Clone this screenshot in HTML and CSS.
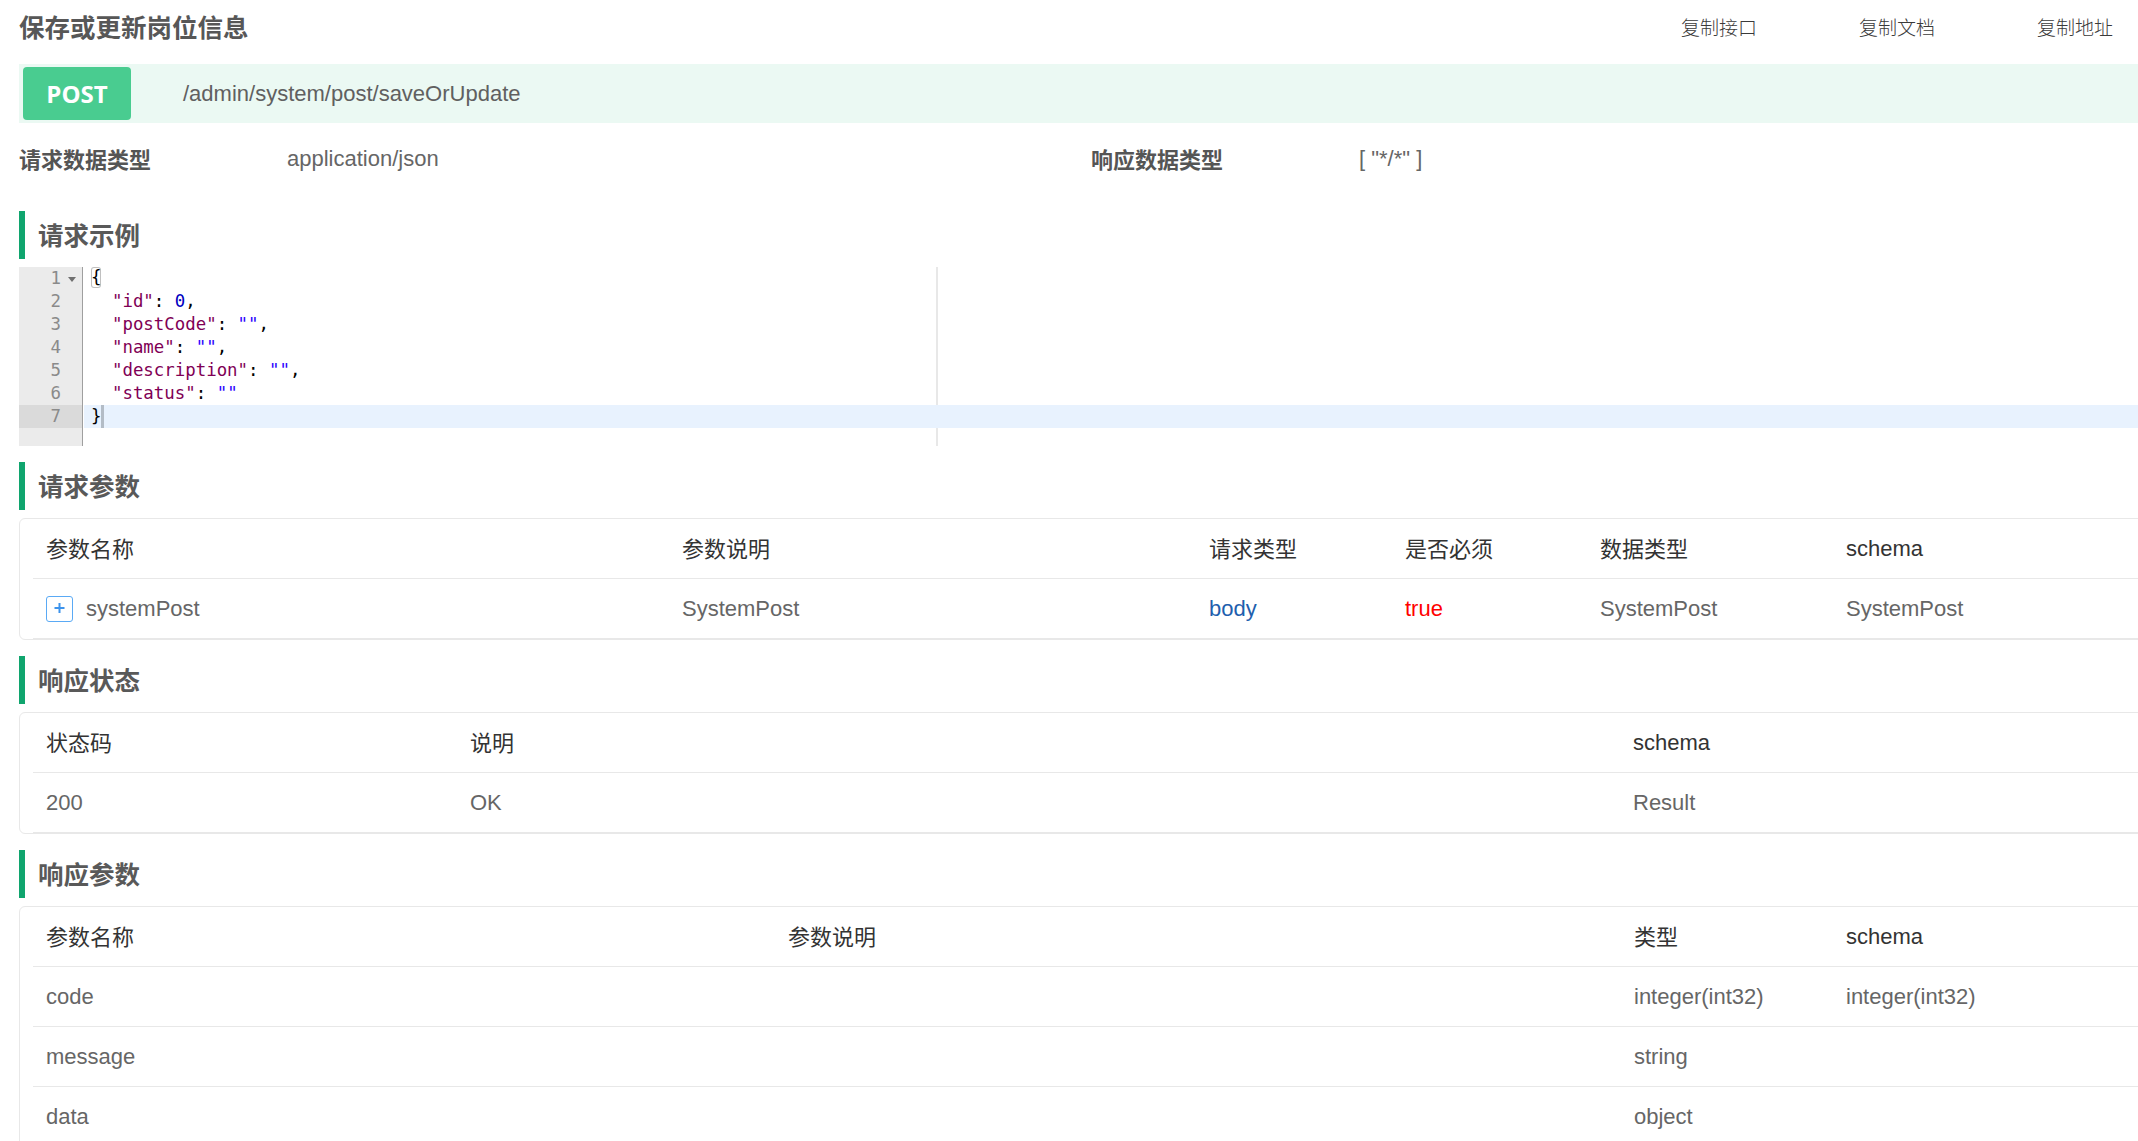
FILE: index.html
```html
<!DOCTYPE html>
<html lang="zh-CN">
<head>
<meta charset="utf-8">
<title>保存或更新岗位信息</title>
<link rel="stylesheet" href="styles.css">
</head>
<body>
<header class="top">
  <h1 class="page-title">保存或更新岗位信息</h1>
  <nav class="copy-links">
    <a class="copy-link">复制接口</a>
    <a class="copy-link">复制文档</a>
    <a class="copy-link">复制地址</a>
  </nav>
</header>
<main class="doc">
  <div class="band">
    <span class="badge">POST</span>
    <span class="path">/admin/system/post/saveOrUpdate</span>
  </div>
  <div class="info">
    <div class="info-col">
      <span class="info-label">请求数据类型</span>
      <span class="info-value">application/json</span>
    </div>
    <div class="info-col">
      <span class="info-label">响应数据类型</span>
      <span class="info-value">[ "*/*" ]</span>
    </div>
  </div>

  <h2 class="sec-title first">请求示例</h2>
  <div class="editor">
    <div class="gutter">
      <div class="g-line"><span class="g-num">1</span><span class="fold"><svg width="15" height="23" viewBox="0 0 15 23"><polygon points="7,10 15,10 11,15" fill="#6f6f6f"/></svg></span></div>
      <div class="g-line"><span class="g-num">2</span><span class="fold"></span></div>
      <div class="g-line"><span class="g-num">3</span><span class="fold"></span></div>
      <div class="g-line"><span class="g-num">4</span><span class="fold"></span></div>
      <div class="g-line"><span class="g-num">5</span><span class="fold"></span></div>
      <div class="g-line"><span class="g-num">6</span><span class="fold"></span></div>
      <div class="g-line g-active"><span class="g-num">7</span><span class="fold"></span></div>
    </div>
    <div class="code">
      <div class="print-margin"></div>
      <div class="c-line"><span class="bracket">{</span></div>
      <div class="c-line">  <span class="k">"id"</span>: <span class="n">0</span>,</div>
      <div class="c-line">  <span class="k">"postCode"</span>: <span class="s">""</span>,</div>
      <div class="c-line">  <span class="k">"name"</span>: <span class="s">""</span>,</div>
      <div class="c-line">  <span class="k">"description"</span>: <span class="s">""</span>,</div>
      <div class="c-line">  <span class="k">"status"</span>: <span class="s">""</span></div>
      <div class="c-line c-active">}<span class="cursor"></span></div>
    </div>
  </div>

  <h2 class="sec-title">请求参数</h2>
  <div class="tbox">
    <table class="t">
      <colgroup><col class="w636"><col class="w527"><col class="w196"><col class="w195"><col class="w246"><col></colgroup>
      <thead>
        <tr><th><span class="cjk">参数名称</span></th><th><span class="cjk">参数说明</span></th><th><span class="cjk">请求类型</span></th><th><span class="cjk">是否必须</span></th><th><span class="cjk">数据类型</span></th><th>schema</th></tr>
      </thead>
      <tbody>
        <tr>
          <td><span class="name-cell"><span class="expand"><svg width="25" height="24" viewBox="0 0 25 24"><path d="M12.5 6v10M7.5 11h10" stroke="#3d93ec" stroke-width="2"/></svg></span>systemPost</span></td>
          <td>SystemPost</td>
          <td class="blue">body</td>
          <td class="red">true</td>
          <td>SystemPost</td>
          <td>SystemPost</td>
        </tr>
      </tbody>
    </table>
  </div>

  <h2 class="sec-title">响应状态</h2>
  <div class="tbox">
    <table class="t">
      <colgroup><col class="w424"><col class="w1163"><col></colgroup>
      <thead>
        <tr><th><span class="cjk">状态码</span></th><th><span class="cjk">说明</span></th><th>schema</th></tr>
      </thead>
      <tbody>
        <tr><td>200</td><td>OK</td><td>Result</td></tr>
      </tbody>
    </table>
  </div>

  <h2 class="sec-title">响应参数</h2>
  <div class="tbox">
    <table class="t">
      <colgroup><col class="w742"><col class="w846"><col class="w212"><col></colgroup>
      <thead>
        <tr><th><span class="cjk">参数名称</span></th><th><span class="cjk">参数说明</span></th><th><span class="cjk">类型</span></th><th>schema</th></tr>
      </thead>
      <tbody>
        <tr><td>code</td><td></td><td>integer(int32)</td><td>integer(int32)</td></tr>
        <tr><td>message</td><td></td><td>string</td><td></td></tr>
        <tr><td>data</td><td></td><td>object</td><td></td></tr>
      </tbody>
    </table>
  </div>
</main>
</body>
</html>
```

FILE: styles.css
```css
html, body {
  margin: 0;
  padding: 0;
  background: #ffffff;
  overflow: hidden;
}
body {
  width: 2138px;
  font-family: "Liberation Sans", "Noto Sans CJK SC", sans-serif;
  color: #595959;
}

/* header */
.top {
  height: 57px;
  margin-bottom: 7px;
  padding: 0 25px 0 19px;
  display: flex;
  align-items: center;
  justify-content: space-between;
}
.page-title {
  margin: 0;
  font-size: 25.5px;
  font-weight: 700;
  color: #575757;
  line-height: 1;
}
.copy-links {
  display: flex;
  gap: 102px;
}
.copy-link {
  font-size: 19px;
  font-weight: 300;
  color: #3a3a3a;
  line-height: 1;
  cursor: pointer;
}

/* main */
.doc {
  width: 2145px;
  margin-left: 19px;
}
.band {
  height: 59px;
  background: #ebf9f3;
  display: flex;
  align-items: center;
  padding-left: 4px;
}
.badge {
  width: 108px;
  height: 53px;
  border-radius: 4px;
  background: #49cc90;
  color: #ffffff;
  font-family: "Open Sans", "Noto Sans", sans-serif;
  font-weight: 700;
  font-size: 24px;
  display: flex;
  align-items: center;
  justify-content: center;
}
.path {
  margin-left: 52px;
  font-size: 22px;
  color: #606060;
}

.info {
  height: 70px;
  display: flex;
  align-items: center;
}
.info-col {
  width: 1072px;
  display: flex;
  align-items: center;
}
.info-label {
  width: 268px;
  font-size: 22px;
  font-weight: 700;
  color: #555555;
}
.info-value {
  font-size: 22px;
  color: #666666;
  padding-top: 2px;
}

/* section titles */
.sec-title {
  margin: 16px 0 8px 0;
  height: 48px;
  box-sizing: border-box;
  border-left: 6px solid #10a56e;
  padding: 0 0 3px 13px;
  display: flex;
  align-items: center;
  font-size: 25.5px;
  font-weight: 700;
  color: #595959;
}
.sec-title.first {
  margin-top: 18px;
}

/* editor */
.editor {
  height: 179px;
  display: flex;
  font-family: "DejaVu Sans Mono", "Liberation Mono", monospace;
  font-size: 17.4px;
}
.gutter {
  width: 63px;
  background: #ebebeb;
  border-right: 1px solid #9f9f9f;
  color: #8a8a8a;
}
.g-line {
  height: 23px;
  line-height: 23px;
  display: flex;
  justify-content: flex-end;
  padding-right: 6px;
}
.g-active {
  background: #dadada;
}
.fold {
  width: 15px;
  height: 23px;
  display: block;
}
.fold svg {
  display: block;
}
.code {
  flex: 1;
  position: relative;
  padding-left: 1px;
}
.print-margin {
  position: absolute;
  left: 853px;
  top: 0;
  bottom: 0;
  width: 2px;
  background: #e8e8e8;
}
.c-line {
  position: relative;
  height: 23px;
  line-height: 23px;
  padding-left: 7px;
  white-space: pre;
  color: #000000;
}
.c-active {
  background: #e8f2fe;
}
.bracket {
  display: inline-block;
  height: 21px;
  line-height: 21px;
  vertical-align: top;
  box-shadow: inset 0 0 0 1px #c0c0c0;
  border-radius: 3px;
}
.cursor {
  display: inline-block;
  width: 3px;
  height: 23px;
  vertical-align: top;
  background: #b3bcc6;
}
.k { color: #7f0055; }
.s { color: #2a00ff; }
.n { color: #0000c0; }

/* tables */
.tbox {
  border: 1px solid #e8e8e8;
  border-radius: 6px;
  padding-left: 13px;
}
.t {
  width: 100%;
  border-collapse: collapse;
  table-layout: fixed;
  font-size: 22px;
}
.t th, .t td {
  height: 59px;
  padding: 0 13px;
  text-align: left;
  vertical-align: middle;
  border-bottom: 1px solid #e8e8e8;
  white-space: nowrap;
}
.t th {
  font-weight: 400;
  color: #333333;
}
.t td {
  color: #666666;
}
.cjk {
  vertical-align: 3px;
}
.t td.blue { color: #1f5fae; }
.t td.red { color: #ff0000; }
.w636 { width: 636px; }
.w527 { width: 527px; }
.w196 { width: 196px; }
.w195 { width: 195px; }
.w246 { width: 246px; }
.w424 { width: 424px; }
.w1163 { width: 1163px; }
.w742 { width: 742px; }
.w846 { width: 846px; }
.w212 { width: 212px; }

.name-cell {
  display: flex;
  align-items: center;
}
.expand {
  width: 25px;
  height: 24px;
  border: 1px solid #5aaaf5;
  border-radius: 3px;
  margin-right: 13px;
  display: block;
}
.expand svg {
  display: block;
}
```
